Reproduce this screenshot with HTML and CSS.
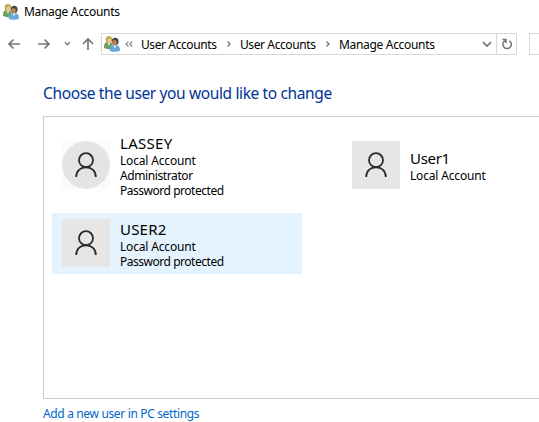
FILE: index.html
```
<!DOCTYPE html>
<html lang="en">
<head>
<meta charset="utf-8">
<title>Manage Accounts</title>
<link rel="stylesheet" href="styles.css">
</head>
<body>
<svg class="defs" width="0" height="0" aria-hidden="true">
  <symbol id="users" viewBox="0 0 16 16">
    <path d="M0 12Q-.2 7 2.5 6.3L7 6Q9 8 8.5 12.5Q4 14 0 12Z" fill="#6b9f62"/>
    <path d="M3.5 6.5L5 10L6.5 6.5Z" fill="#e9f0df"/>
    <ellipse cx="4.9" cy="3.6" rx="3.3" ry="3.6" fill="#c2a64f"/>
    <ellipse cx="5.4" cy="4.8" rx="2" ry="2.5" fill="#edc794"/>
    <path d="M5.8 15Q5.5 10 8.6 9.3L13 9.2Q16.2 10 16 14.8Q11 16.8 5.8 15Z" fill="#65a9dc"/>
    <path d="M9.1 9.2L10.9 12.5L12.7 9.2Z" fill="#d6edf7"/>
    <ellipse cx="11.2" cy="5.4" rx="3.4" ry="3.7" fill="#4c4540"/>
    <ellipse cx="10.5" cy="6.8" rx="2.3" ry="2.8" fill="#b98459"/>
  </symbol>
  <symbol id="person" viewBox="0 0 48 48">
    <g fill="none" stroke="#2b2b2b" stroke-width="1.8"><circle cx="24" cy="19.2" r="7"/><path d="M14.2 36C14.2 23 33.8 23 33.8 36"/></g>
  </symbol>
</svg>
<header class="title"><svg class="users"><use href="#users"/></svg><span>Manage Accounts</span></header>
<nav class="nav">
  <svg class="arrows" width="101" height="22" viewBox="0 0 101 22" fill="none" stroke="#767676" stroke-width="1.7">
    <path d="M20 11H9M13.5 6.5L9 11L13.5 15.5M38 11H49M44.5 6.5L49 11L44.5 15.5M88 17V6M83 11L88 6L93 11"/>
    <path d="M65 9.3L67.5 11.8L70 9.3" stroke-width="1.4"/>
  </svg>
  <div class="address">
    <svg class="users"><use href="#users"/></svg>
    <svg class="back" width="8" height="8" viewBox="0 0 8 8"><path d="M3.5 1.7L1 4.2L3.5 6.7M7.3 1.7L4.8 4.2L7.3 6.7"/></svg>
    <span class="crumb">User Accounts</span>
    <svg class="sep" width="6" height="8" viewBox="0 0 6 8"><path d="M1.5 1.5L4 4L1.5 6.5"/></svg>
    <span class="crumb">User Accounts</span>
    <svg class="sep" width="6" height="8" viewBox="0 0 6 8"><path d="M1.5 1.5L4 4L1.5 6.5"/></svg>
    <span class="crumb last">Manage Accounts</span>
    <svg class="down" width="10" height="7" viewBox="0 0 10 7"><path d="M1 1.2L5 5L9 1.2"/></svg>
    <div class="refresh"><svg width="12" height="12" viewBox="0 0 12 12"><path d="M8.3 2.8A4.2 4.2 0 1 1 2.8 3.8L4.8 2.3M1.5 1.5H5V5"/></svg></div>
  </div>
  <div class="search"></div>
</nav>
<main>
  <h1>Choose the user you would like to change</h1>
  <section class="panel">
    <article class="tile raised">
      <div class="avatar round"><svg><use href="#person"/></svg></div>
      <div class="info"><h2 class="n1">LASSEY</h2><p class="local">Local Account</p><p class="admin">Administrator</p><p class="pass">Password protected</p></div>
    </article>
    <article class="tile">
      <div class="avatar"><svg><use href="#person"/></svg></div>
      <div class="info short"><h2>User1</h2><p class="local">Local Account</p></div>
    </article>
    <article class="tile selected">
      <div class="avatar"><svg><use href="#person"/></svg></div>
      <div class="info"><h2 class="n3">USER2</h2><p class="local">Local Account</p><p class="pass">Password protected</p></div>
    </article>
  </section>
  <a class="add">Add a new user in PC settings</a>
</main>
</body>
</html>
```
FILE: styles.css
```
* { box-sizing: border-box; }
body { margin: 0; height: 422px; overflow: hidden; background: #fff; color: #000; font: 12px/15px "Noto Sans", "Open Sans", sans-serif; letter-spacing: -.32px; white-space: nowrap; }
h1, h2, p { margin: 0; font-weight: 400; }
svg { display: block; flex: none; }
.defs { position: absolute; }
.users { width: 16px; height: 16px; }
.title { display: flex; align-items: center; height: 23px; padding-left: 3px; gap: 5px; }
.nav { display: flex; height: 22px; margin-top: 10px; }
.address { display: flex; align-items: center; flex: none; width: 416px; border: 1px solid #d9d9d9; padding-left: 2px; }
.address path { fill: none; stroke: #767676; stroke-width: 1.4; }
.address .users path { stroke: none; }
.address .back path { stroke-width: 1.1; }
.back { margin: 0 8px 0 5px; }
.crumb { width: 76px; letter-spacing: -.4px; }
.crumb.last { width: 96px; letter-spacing: -.32px; }
.sep { margin: 0 8px 0 9px; }
.address .down { margin-left: auto; margin-right: 4px; }
.address .down path { stroke-width: 1.7; }
.refresh { display: grid; place-items: center; width: 20px; height: 20px; border-left: 1px solid #d9d9d9; }
.refresh path { stroke-width: 1.5; }
.search { width: 10px; margin-left: 12px; border: 1px solid #d9d9d9; border-right: 0; flex: none; }
main { padding: 27px 0 0 43px; }
h1 { color: #039; font-size: 15.5px; line-height: 22px; height: 34px; letter-spacing: -.37px; }
.panel { display: grid; grid-template-columns: 250px 197px; grid-template-rows: 78px 61px; column-gap: 40px; height: 283px; padding: 18px 0 0 8px; border: 1px solid #c9c9c9; border-right: 0; }
.tile { display: flex; padding: 6px 10px; gap: 10px; }
.selected { background: #e5f3ff; }
.avatar { width: 48px; height: 48px; background: #e6e6e6; flex: none; }
.avatar svg { width: 48px; height: 48px; }
.round { background: radial-gradient(circle, #e4e4e4 23.5px, #f8fbf8 24px); }
.raised .info { margin-top: -8px; }
.info.short { padding-top: 7px; }
h2 { font-size: 15px; line-height: 20px; letter-spacing: -.3px; }
.n1 { letter-spacing: .3px; }
.n3 { letter-spacing: .2px; }
.local { letter-spacing: -.17px; }
.admin { letter-spacing: -.4px; }
.pass { letter-spacing: -.47px; }
.add { display: block; margin-top: 7px; color: #0066cc; letter-spacing: -.35px; }
```
